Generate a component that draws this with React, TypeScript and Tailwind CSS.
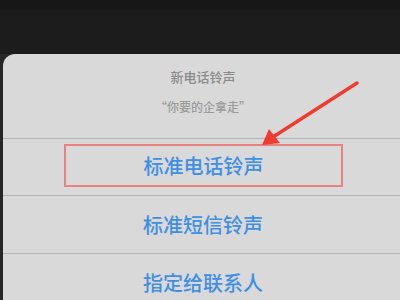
import React from 'react';

const font = { fontFamily: '"Noto Sans CJK SC", "Liberation Sans", sans-serif' };

const App = () => {
  return (
    <div className="relative w-[400px] h-[300px] overflow-hidden bg-[#1b1c1b]" style={font}>
      <div className="h-[10px] bg-[#161716]" />
      <div className="h-[44px]" />
      <div className="pl-[3px] bg-[#262626]">
        <div className="w-[410px] h-[260px] bg-[#d9d9d9] rounded-tl-[12px]">
          <div className="h-[85px] flex flex-col items-center pr-[10px] border-b border-[#b3b3b3]">
            <div className="mt-[13px] text-[13px] leading-[20px] text-[#8a8a8a] font-medium">新电话铃声</div>
            <div className="mt-[10px] text-[12px] leading-[20px] text-[#9a9a9a] font-medium">“你要的企拿走”</div>
          </div>
          <div className="h-[57px] border-b border-[#b3b3b3] pt-[5px]">
            <div className="ml-[61px] w-[279px] h-[43px] border-2 border-[#e9817e] flex items-center justify-center text-[20px] text-[#3f8fe2] font-medium">
              标准电话铃声
            </div>
          </div>
          <div className="h-[58px] border-b border-[#b3b3b3] pr-[10px] flex items-center justify-center text-[20px] text-[#3f8fe2] font-medium">
            标准短信铃声
          </div>
          <div className="h-[58px] pr-[10px] flex items-center justify-center text-[20px] text-[#3f8fe2] font-medium">
            指定给联系人
          </div>
        </div>
      </div>
      <svg className="absolute left-0 top-0" width="400" height="300" viewBox="0 0 400 300">
        <line x1="357" y1="83" x2="273" y2="137" stroke="#ef3b30" strokeWidth="3.5" strokeLinecap="round" />
        <polygon points="262,145 269,129 280,143" fill="#ef3b30" />
      </svg>
    </div>
  );
};

export default App;
